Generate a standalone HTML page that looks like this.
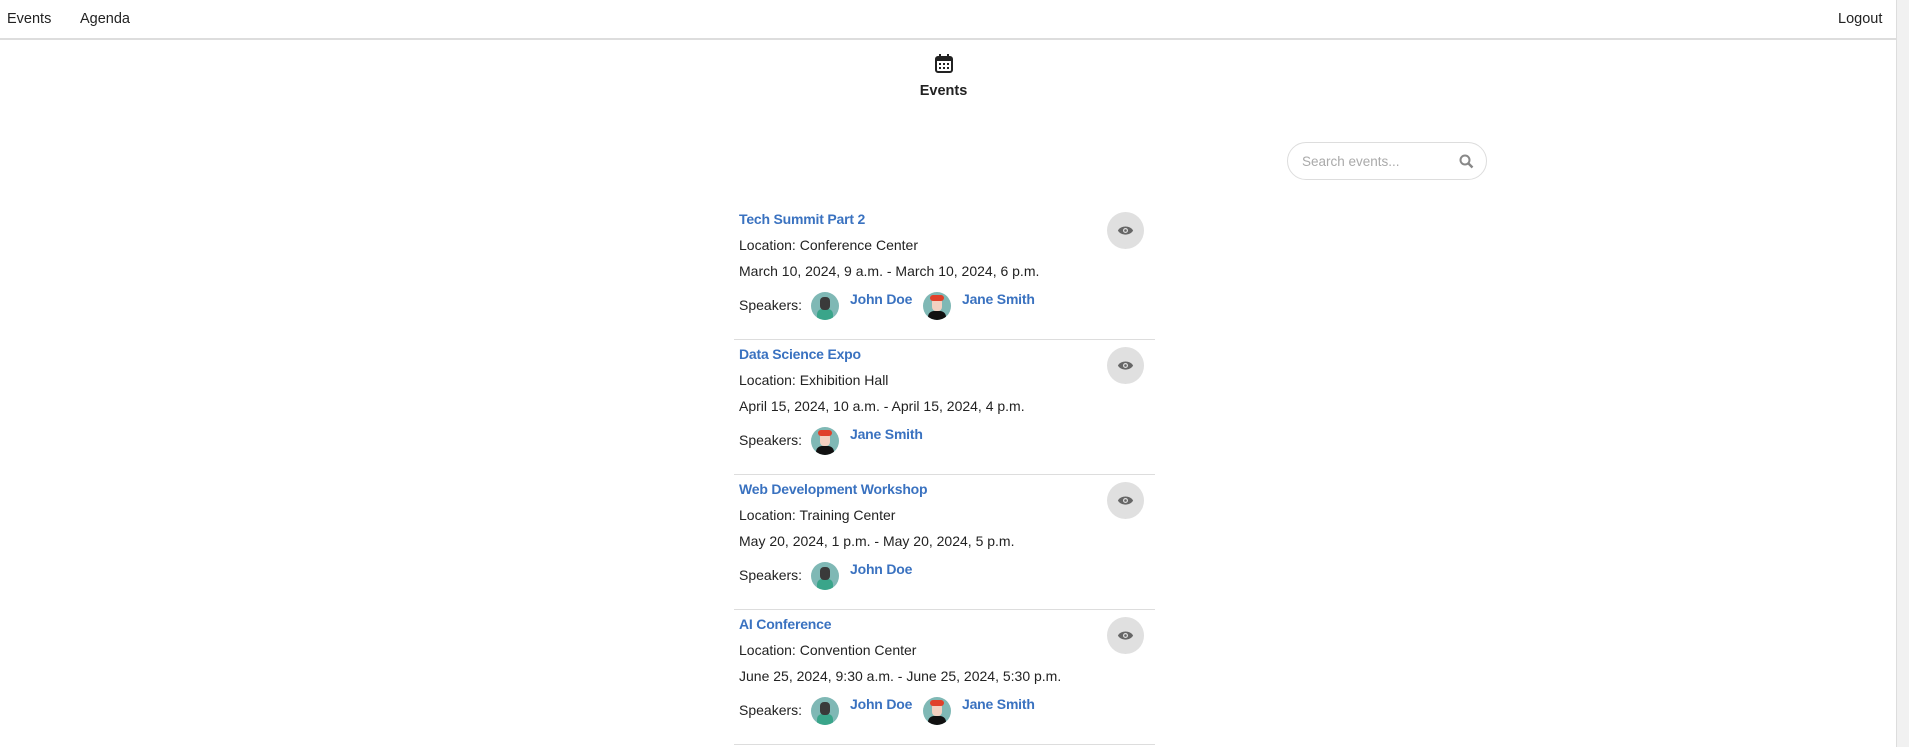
<!DOCTYPE html>
<html><head><meta charset="utf-8"><style>
*{box-sizing:border-box;margin:0;padding:0}
body{width:1909px;height:747px;overflow:hidden;background:#fff;font-family:"Liberation Sans",sans-serif;color:#222;position:relative}
.nav{position:absolute;left:0;top:0;width:1896px;height:40px;border-bottom:2px solid #ddd}
.nav span{position:absolute;top:11px;font-size:14.5px;color:#222}
.sb{position:absolute;right:0;top:0;width:13px;height:747px;background:#f1f1f1;border-left:1px solid #ddd}
.title{position:absolute;left:0;width:1887px;text-align:center;top:83px;font-weight:bold;font-size:14.5px}
.search{position:absolute;left:1287px;top:142px;width:200px;height:38px;border:1px solid #ddd;border-radius:19px;font-size:13.5px;color:#aaa;padding:11px 14px}
.item{position:absolute;left:734px;width:421px;height:130px;border-bottom:1.5px solid #ddd}
.item .t{position:absolute;left:5px;top:1px;color:#3a72c0;font-weight:bold;font-size:14px;letter-spacing:-0.2px}
.item .l{position:absolute;left:5px;top:27px;font-size:14px}
.item .d{position:absolute;left:5px;top:53px;font-size:14px}
.item .s{position:absolute;left:5px;top:87px;font-size:14px}
.item .eye{position:absolute;left:373px;top:2px;width:37px;height:37px;border-radius:50%;background:#e0e0e0}
.av{position:absolute;top:82px;width:28px;height:28px;border-radius:50%;background:#7fb8b5;overflow:hidden}
.nm{position:absolute;top:81px;color:#3a72c0;font-weight:bold;font-size:14px;letter-spacing:-0.2px}
</style></head><body>
<div class="nav"><span style="left:7px">Events</span><span style="left:80px">Agenda</span><span style="left:1838px">Logout</span></div>
<div class="sb"></div>
<svg style="position:absolute;left:934px;top:53px" width="20" height="20" viewBox="0 0 20 20"><rect x="2" y="4" width="16" height="15" rx="2" fill="none" stroke="#222" stroke-width="2"/><rect x="2" y="4" width="16" height="4" fill="#222"/><rect x="5" y="1" width="2" height="5" fill="#222"/><rect x="13" y="1" width="2" height="5" fill="#222"/><g fill="#222"><rect x="5" y="10" width="2" height="2"/><rect x="9" y="10" width="2" height="2"/><rect x="13" y="10" width="2" height="2"/><rect x="5" y="14" width="2" height="2"/><rect x="9" y="14" width="2" height="2"/><rect x="13" y="14" width="2" height="2"/></g></svg>
<div class="title">Events</div>
<div class="search">Search events...<svg style="position:absolute;right:12px;top:11px" width="15" height="15" viewBox="0 0 15 15"><circle cx="6" cy="6" r="4.5" fill="none" stroke="#888" stroke-width="2"/><path d="M9.5 9.5L13.5 13.5" stroke="#888" stroke-width="2.4"/></svg></div>
<div class="item" style="top:210px">
<div class="t">Tech Summit Part 2</div><div class="l">Location: Conference Center</div><div class="d">March 10, 2024, 9 a.m. - March 10, 2024, 6 p.m.</div><div class="s">Speakers:</div>
<div class="av" style="left:77px"><div style="position:absolute;left:6px;top:17px;width:16px;height:14px;background:#3aa58a;border-radius:5px"></div><div style="position:absolute;left:9px;top:5px;width:10px;height:13px;background:#3a3a3a;border-radius:4px"></div></div><div class="nm" style="left:116px">John Doe</div>
<div class="av" style="left:189px"><div style="position:absolute;left:5px;top:19px;width:18px;height:12px;background:#111;border-radius:6px"></div><div style="position:absolute;left:9px;top:6px;width:10px;height:13px;background:#f3d0c0;border-radius:4px"></div><div style="position:absolute;left:7px;top:3px;width:14px;height:6px;background:#e0402a;border-radius:4px"></div></div><div class="nm" style="left:228px">Jane Smith</div>
<div class="eye"><svg style="position:absolute;left:10px;top:12px" width="17" height="13" viewBox="0 0 15 12"><path d="M0.5 6C3 1 12 1 14.5 6C12 11 3 11 0.5 6Z" fill="#666"/><circle cx="7.5" cy="6" r="2.3" fill="#e0e0e0"/><circle cx="7.5" cy="6" r="1.2" fill="#666"/></svg></div>
</div>
<div class="item" style="top:345px">
<div class="t">Data Science Expo</div><div class="l">Location: Exhibition Hall</div><div class="d">April 15, 2024, 10 a.m. - April 15, 2024, 4 p.m.</div><div class="s">Speakers:</div>
<div class="av" style="left:77px"><div style="position:absolute;left:5px;top:19px;width:18px;height:12px;background:#111;border-radius:6px"></div><div style="position:absolute;left:9px;top:6px;width:10px;height:13px;background:#f3d0c0;border-radius:4px"></div><div style="position:absolute;left:7px;top:3px;width:14px;height:6px;background:#e0402a;border-radius:4px"></div></div><div class="nm" style="left:116px">Jane Smith</div>
<div class="eye"><svg style="position:absolute;left:10px;top:12px" width="17" height="13" viewBox="0 0 15 12"><path d="M0.5 6C3 1 12 1 14.5 6C12 11 3 11 0.5 6Z" fill="#666"/><circle cx="7.5" cy="6" r="2.3" fill="#e0e0e0"/><circle cx="7.5" cy="6" r="1.2" fill="#666"/></svg></div>
</div>
<div class="item" style="top:480px">
<div class="t">Web Development Workshop</div><div class="l">Location: Training Center</div><div class="d">May 20, 2024, 1 p.m. - May 20, 2024, 5 p.m.</div><div class="s">Speakers:</div>
<div class="av" style="left:77px"><div style="position:absolute;left:6px;top:17px;width:16px;height:14px;background:#3aa58a;border-radius:5px"></div><div style="position:absolute;left:9px;top:5px;width:10px;height:13px;background:#3a3a3a;border-radius:4px"></div></div><div class="nm" style="left:116px">John Doe</div>
<div class="eye"><svg style="position:absolute;left:10px;top:12px" width="17" height="13" viewBox="0 0 15 12"><path d="M0.5 6C3 1 12 1 14.5 6C12 11 3 11 0.5 6Z" fill="#666"/><circle cx="7.5" cy="6" r="2.3" fill="#e0e0e0"/><circle cx="7.5" cy="6" r="1.2" fill="#666"/></svg></div>
</div>
<div class="item" style="top:615px">
<div class="t">AI Conference</div><div class="l">Location: Convention Center</div><div class="d">June 25, 2024, 9:30 a.m. - June 25, 2024, 5:30 p.m.</div><div class="s">Speakers:</div>
<div class="av" style="left:77px"><div style="position:absolute;left:6px;top:17px;width:16px;height:14px;background:#3aa58a;border-radius:5px"></div><div style="position:absolute;left:9px;top:5px;width:10px;height:13px;background:#3a3a3a;border-radius:4px"></div></div><div class="nm" style="left:116px">John Doe</div>
<div class="av" style="left:189px"><div style="position:absolute;left:5px;top:19px;width:18px;height:12px;background:#111;border-radius:6px"></div><div style="position:absolute;left:9px;top:6px;width:10px;height:13px;background:#f3d0c0;border-radius:4px"></div><div style="position:absolute;left:7px;top:3px;width:14px;height:6px;background:#e0402a;border-radius:4px"></div></div><div class="nm" style="left:228px">Jane Smith</div>
<div class="eye"><svg style="position:absolute;left:10px;top:12px" width="17" height="13" viewBox="0 0 15 12"><path d="M0.5 6C3 1 12 1 14.5 6C12 11 3 11 0.5 6Z" fill="#666"/><circle cx="7.5" cy="6" r="2.3" fill="#e0e0e0"/><circle cx="7.5" cy="6" r="1.2" fill="#666"/></svg></div>
</div>
</body></html>
